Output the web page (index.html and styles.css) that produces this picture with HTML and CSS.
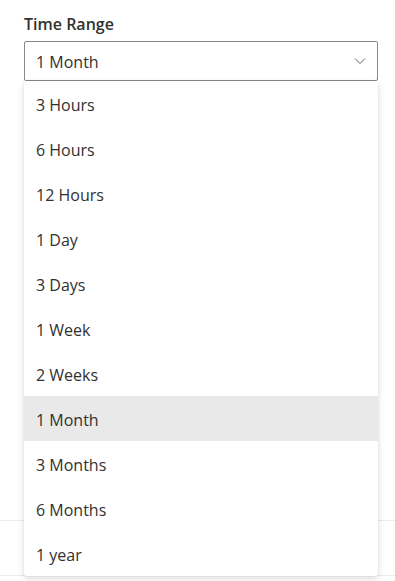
FILE: index.html
```html
<!DOCTYPE html>
<html lang="en">
<head>
  <meta charset="UTF-8">
  <meta name="viewport" content="width=device-width, initial-scale=1.0">
  <title>Time Range</title>
  <link rel="stylesheet" href="styles.css">
</head>
<body>
  <div class="panel">
    <div class="field">
      <label class="field-label">Time Range</label>
      <div class="select">
        <span class="select-value">1 Month</span>
        <svg class="chevron" width="12" height="8" viewBox="0 0 12 8">
          <path d="M1 1.5 L6 6.5 L11 1.5" fill="none" stroke="#605e5c" stroke-width="1"/>
        </svg>
      </div>
      <ul class="options">
        <li>3 Hours</li>
        <li>6 Hours</li>
        <li>12 Hours</li>
        <li>1 Day</li>
        <li>3 Days</li>
        <li>1 Week</li>
        <li>2 Weeks</li>
        <li class="selected">1 Month</li>
        <li>3 Months</li>
        <li>6 Months</li>
        <li>1 year</li>
      </ul>
    </div>
    <div class="spacer"></div>
    <div class="footer"></div>
    <div class="footer-end"></div>
  </div>
</body>
</html>
```

FILE: styles.css
```css
body {
  margin: 0;
  font-family: "Open Sans", "Noto Sans", Arial, sans-serif;
  color: #323130;
  background: #ffffff;
}
.panel {
  height: 581px;
  overflow: hidden;
}
.field {
  position: relative;
  padding: 13px 17px 0 24px;
}
.field-label {
  display: block;
  font-size: 16px;
  font-weight: 600;
  line-height: 22px;
  margin-bottom: 6px;
}
.select {
  height: 38px;
  box-sizing: content-box;
  border: 1px solid #8a8886;
  border-radius: 2px;
  display: flex;
  align-items: center;
  justify-content: space-between;
  padding: 0 11px 0 11px;
}
.select-value {
  font-size: 16px;
  padding-top: 2px;
}
.chevron {
  display: block;
}
.options {
  position: absolute;
  left: 24px;
  right: 17px;
  top: 81px;
  margin: 0;
  padding: 0;
  list-style: none;
  background: #ffffff;
  border-radius: 2px;
  box-shadow: 0 3px 7px rgba(0, 0, 0, 0.13), 0 0 2px rgba(0, 0, 0, 0.11);
  z-index: 2;
}
.options li {
  box-sizing: border-box;
  height: 45px;
  line-height: 42px;
  padding: 3px 12px 0 12px;
  font-size: 16px;
}
.options li.selected {
  background: #e9e9e9;
}
.spacer {
  height: 439px;
}
.footer {
  height: 54px;
  border-top: 1px solid #edebe9;
}
.footer-end {
  border-top: 1px solid #edebe9;
}
```
